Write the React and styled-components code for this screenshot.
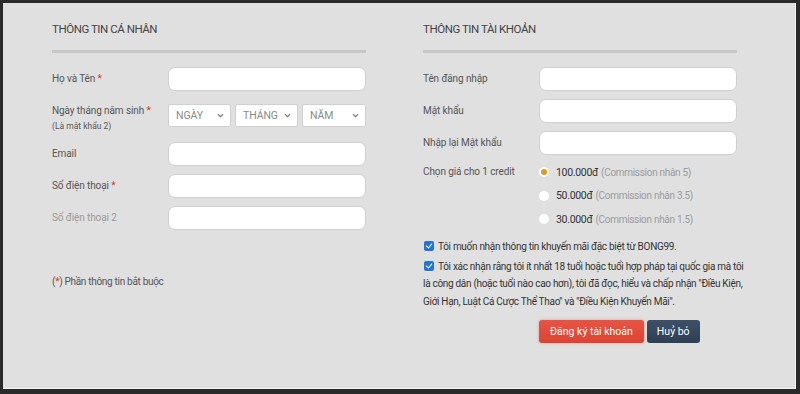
import React from "react";
import styled, { createGlobalStyle } from "styled-components";

const Global = createGlobalStyle`
  html, body { margin: 0; padding: 0; background: #2b2b2b; }
  body { font-family: Roboto, "Noto Sans", Arial, sans-serif; }
  * { box-sizing: border-box; }
`;

const Frame = styled.div`
  width: 800px;
  height: 394px;
  padding: 3px 4px 5px 3px;
  background: #2a2a2a;
`;

const Panel = styled.div`
  height: 100%;
  background: #e0e0e0;
  border-right: 1px solid #f2f2f2;
  border-bottom: 1px solid #f2f2f2;
  padding: 17px 0 0 49px;
  display: grid;
  grid-template-columns: 314px 314px;
  column-gap: 57px;
  align-items: start;
`;

const Column = styled.div`
  display: flex;
  flex-direction: column;
`;

const Heading = styled.h2`
  margin: 0;
  font-size: 11.5px;
  font-weight: 400;
  color: #444;
  line-height: 18px;
  letter-spacing: -0.45px;
`;

const Divider = styled.div`
  height: 3px;
  background: #c7c7c7;
  margin: 12px 0 14px;
`;

const Row = styled.div`
  display: grid;
  grid-template-columns: 116px 198px;
  align-items: ${(p) => (p.$top ? "start" : "center")};
  height: ${(p) => p.$h || 24}px;
  margin-bottom: ${(p) => p.$mb ?? 8}px;
`;

const Label = styled.div`
  font-size: 10px;
  letter-spacing: -0.1px;
  color: ${(p) => (p.$muted ? "#9a9a9a" : "#555")};
  line-height: 14px;
  margin-top: ${(p) => p.$offset || 0}px;
`;

const SubLabel = styled.div`
  font-size: 8.5px;
  color: #555;
  margin-top: 3px;
`;

const Star = styled.span`
  color: #d9352b;
`;

const Input = styled.input`
  width: 198px;
  height: 24px;
  border: 1px solid #d0d0d0;
  border-radius: 7px;
  background: #fff;
  outline: none;
  padding: 0 8px;
`;

const Selects = styled.div`
  display: grid;
  grid-template-columns: 63px 63px 64px;
  column-gap: 4px;
`;

const SelectBox = styled.div`
  height: 23px;
  background: #fff;
  border: 1px solid #d0d0d0;
  border-radius: 2px;
  display: flex;
  align-items: center;
  justify-content: space-between;
  padding: 0 6px 0 7px;
  font-size: 10.5px;
  letter-spacing: -0.1px;
  color: #8a8a8a;
`;

const Chevron = () => (
  <svg width="7" height="5" viewBox="0 0 8 6">
    <path d="M1 1.5 L4 4.5 L7 1.5" fill="none" stroke="#777" strokeWidth="1.3" />
  </svg>
);

const Note = styled.div`
  margin-top: 38px;
  font-size: 10px;
  letter-spacing: -0.3px;
  color: #555;
`;

const RadioList = styled.div`
  display: flex;
  flex-direction: column;
  gap: 7.5px;
  padding-top: 1px;
`;

const RadioItem = styled.div`
  display: flex;
  align-items: center;
  height: 16px;
  font-size: 10.5px;
  letter-spacing: -0.3px;
  color: #333;
`;

const RadioDot = styled.span`
  width: 10px;
  height: 10px;
  border-radius: 50%;
  background: #fff;
  margin: 0 7px 0 0;
  display: flex;
  align-items: center;
  justify-content: center;
  &::after {
    content: "";
    width: 6px;
    height: 6px;
    border-radius: 50%;
    background: ${(p) => (p.$on ? "#e8961e" : "transparent")};
  }
`;

const Muted = styled.span`
  color: #9b9b9b;
  font-size: 10px;
  margin-left: 3px;
`;

const Terms = styled.div`
  margin-top: 11px;
  font-size: 10px;
  letter-spacing: -0.3px;
  color: #333;
  line-height: 17.5px;
  white-space: nowrap;
`;

const TermLine = styled.div`
  margin-bottom: ${(p) => p.$mb || 0}px;
`;

const Check = styled.span`
  display: inline-block;
  width: 10px;
  height: 10px;
  background: #1f74d6;
  border-radius: 2px;
  vertical-align: -1px;
  margin: 0 4px 0 1px;
  position: relative;
  &::after {
    content: "";
    position: absolute;
    left: 3px;
    top: 1px;
    width: 3px;
    height: 5px;
    border: solid #fff;
    border-width: 0 1.5px 1.5px 0;
    transform: rotate(40deg);
  }
`;

const Buttons = styled.div`
  display: flex;
  gap: 3px;
  margin: 10px 0 0 116px;
`;

const Button = styled.button`
  height: 23px;
  border: none;
  border-radius: 3px;
  padding: 0 ${(p) => (p.$primary ? 11 : 10)}px;
  font-family: inherit;
  font-size: 10.5px;
  color: #fff;
  background: ${(p) =>
    p.$primary
      ? "linear-gradient(#e85444, #dc4332)"
      : "linear-gradient(#3d5068, #2f3f54)"};
  box-shadow: ${(p) => (p.$primary ? "0 0 3px rgba(230,80,60,0.5)" : "none")};
`;

export default function App() {
  return (
    <>
      <Global />
      <Frame>
        <Panel>
          <Column>
            <Heading>THÔNG TIN CÁ NHÂN</Heading>
            <Divider />
            <Row $mb={13}>
              <Label>
                Họ và Tên <Star>*</Star>
              </Label>
              <Input />
            </Row>
            <Row $top $h={23} $mb={15}>
              <div>
                <Label>
                  Ngày tháng năm sinh <Star>*</Star>
                </Label>
                <SubLabel>(Là mật khẩu 2)</SubLabel>
              </div>
              <Selects>
                <SelectBox>
                  NGÀY <Chevron />
                </SelectBox>
                <SelectBox>
                  THÁNG <Chevron />
                </SelectBox>
                <SelectBox>
                  NĂM <Chevron />
                </SelectBox>
              </Selects>
            </Row>
            <Row>
              <Label>Email</Label>
              <Input />
            </Row>
            <Row>
              <Label>
                Số điện thoại <Star>*</Star>
              </Label>
              <Input />
            </Row>
            <Row>
              <Label $muted>Số điện thoại 2</Label>
              <Input />
            </Row>
            <Note>
              (<Star>*</Star>) Phần thông tin bắt buộc
            </Note>
          </Column>
          <Column>
            <Heading>THÔNG TIN TÀI KHOẢN</Heading>
            <Divider />
            <Row>
              <Label>Tên đăng nhập</Label>
              <Input />
            </Row>
            <Row>
              <Label>Mật khẩu</Label>
              <Input />
            </Row>
            <Row>
              <Label>Nhập lại Mật khẩu</Label>
              <Input type="password" />
            </Row>
            <Row $top $h={64} $mb={0}>
              <Label $offset={2}>Chọn giá cho 1 credit</Label>
              <RadioList>
                <RadioItem>
                  <RadioDot $on />
                  100.000đ <Muted>(Commission nhân 5)</Muted>
                </RadioItem>
                <RadioItem>
                  <RadioDot />
                  50.000đ <Muted>(Commission nhân 3.5)</Muted>
                </RadioItem>
                <RadioItem>
                  <RadioDot />
                  30.000đ <Muted>(Commission nhân 1.5)</Muted>
                </RadioItem>
              </RadioList>
            </Row>
            <Terms>
              <TermLine $mb={2}>
                <Check />
                Tôi muốn nhận thông tin khuyến mãi đặc biệt từ BONG99.
              </TermLine>
              <TermLine>
                <Check />
                Tôi xác nhận rằng tôi ít nhất 18 tuổi hoặc tuổi hợp pháp tại quốc gia mà tôi
                <br />
                là công dân (hoặc tuổi nào cao hơn), tôi đã đọc, hiểu và chấp nhận "Điều Kiện,
                <br />
                Giới Hạn, Luật Cá Cược Thể Thao" và "Điều Kiện Khuyến Mãi".
              </TermLine>
            </Terms>
            <Buttons>
              <Button $primary>Đăng ký tài khoản</Button>
              <Button>Huỷ bỏ</Button>
            </Buttons>
          </Column>
        </Panel>
      </Frame>
    </>
  );
}
